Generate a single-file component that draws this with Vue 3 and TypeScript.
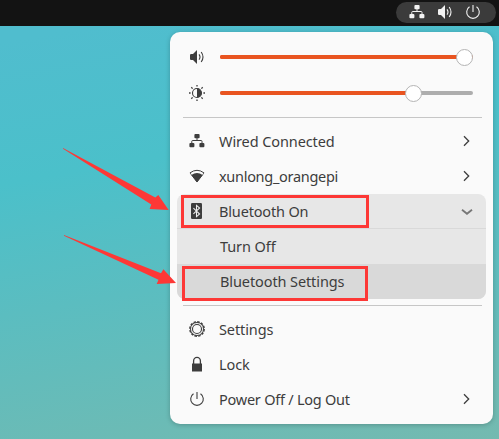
<script setup lang="ts">
interface Item {
  id: string
  label: string
  icon: string
  more?: boolean
}

const sliders = [
  { id: 'volume', value: 96.8 },
  { id: 'brightness', value: 76.3 },
]

const network: Item[] = [
  { id: 'wired', label: 'Wired Connected', icon: 'wired', more: true },
  { id: 'wifi', label: 'xunlong_orangepi', icon: 'wifi', more: true },
]

const session: Item[] = [
  { id: 'settings', label: 'Settings', icon: 'gear' },
  { id: 'lock', label: 'Lock', icon: 'lock' },
  { id: 'power', label: 'Power Off / Log Out', icon: 'power', more: true },
]
</script>

<template>
  <div class="desktop">
    <svg class="sprite" width="0" height="0">
      <symbol id="i-wired" viewBox="0 0 16 16">
        <rect x="5.4" y="1" width="5.2" height="4.2" rx="1" fill="currentColor" />
        <rect x="0.4" y="10" width="5" height="4.2" rx="1" fill="currentColor" />
        <rect x="10.4" y="10" width="5" height="4.2" rx="1" fill="currentColor" />
        <path d="M8 5v2.5M2.8 10.5V8.3Q2.8 7.5 3.6 7.5h8.6q.8 0 .8.8v2.2" fill="none" stroke="currentColor" />
      </symbol>
      <symbol id="i-volume" viewBox="0 0 16 16">
        <path d="M1 5.7 1.8 5H4l4-4v14l-4-4H1.8L1 10.3z" fill="currentColor" />
        <path d="M10 5.4q2 2.6 0 5.2M12.2 3q3.6 5 0 10" fill="none" stroke="currentColor" stroke-width="1.1" />
      </symbol>
      <symbol id="i-power" viewBox="0 0 16 16">
        <path d="M8 1v7M4.5 2.8a6.3 6.3 0 1 0 7 0" fill="none" stroke="currentColor" stroke-width="1.1" />
      </symbol>
      <symbol id="i-brightness" viewBox="0 0 16 16">
        <circle cx="8" cy="8" r="4.5" fill="none" stroke="currentColor" stroke-width="1.1" />
        <path d="M8 3.5a4.5 4.5 0 0 1 0 9z" fill="currentColor" />
        <path d="M8 0v1.6M8 14.4V16M0 8h1.6M14.4 8H16M2.3 2.3l1.3 1.3M12.4 12.4l1.3 1.3M2.3 13.7l1.3-1.3M12.4 3.6l1.3-1.3" stroke="currentColor" stroke-width="1.3" />
      </symbol>
      <symbol id="i-wifi" viewBox="0 0 16 16">
        <path d="M1 4.9Q8-.3 15 4.9L8 14z" fill="none" stroke="currentColor" stroke-linejoin="round" />
        <path d="M2.4 6.9Q8 3.1 13.6 6.9L8 14.2z" fill="currentColor" />
        <path d="M1.6 5.6 2.6 7M14.4 5.6l-1 1.4" stroke="#fafafa" stroke-width=".5" />
      </symbol>
      <symbol id="i-bluetooth" viewBox="0 0 16 16">
        <rect x="2" y="0" width="11" height="16" rx="1.2" fill="currentColor" />
        <path d="M4.4 5.1 10.6 11 7.5 13.6V2.4L10.6 5 4.4 10.9" fill="none" stroke="#efefef" stroke-width="1.05" />
      </symbol>
      <symbol id="i-gear" viewBox="0 0 16 16">
        <circle cx="8" cy="8" r="7.2" fill="none" stroke="currentColor" stroke-width="1.4" stroke-dasharray="2.5 1.27" />
        <circle cx="8" cy="8" r="6.5" fill="none" stroke="currentColor" stroke-width="1" />
        <circle cx="8" cy="8" r="4.5" fill="none" stroke="currentColor" stroke-width="1.1" />
      </symbol>
      <symbol id="i-lock" viewBox="0 0 16 16">
        <path d="M3 7.5h10V15.5H3z" fill="currentColor" />
        <path d="M4.6 8V5a3.4 3.6 0 0 1 6.8 0v3" fill="none" stroke="currentColor" stroke-width="1.3" />
      </symbol>
      <symbol id="i-next" viewBox="0 0 16 16">
        <path d="M6 3.2 10.7 8 6 12.8" fill="none" stroke="currentColor" stroke-width="1.3" />
      </symbol>
      <symbol id="i-down" viewBox="0 0 16 16">
        <path d="M3 6.7 8 10.8l5-4.1" fill="none" stroke="currentColor" stroke-width="1.8" />
      </symbol>
    </svg>

    <header class="topbar">
      <div class="tray">
        <svg class="icon"><use href="#i-wired" /></svg>
        <svg class="icon"><use href="#i-volume" /></svg>
        <svg class="icon"><use href="#i-power" /></svg>
      </div>
    </header>

    <main class="panel">
      <div v-for="s in sliders" :key="s.id" class="slider-row">
        <svg class="icon"><use :href="`#i-${s.id}`" /></svg>
        <div class="track">
          <div class="fill" :style="{ width: s.value + '%' }"><span class="knob" /></div>
        </div>
      </div>
      <hr class="rule" />
      <div v-for="n in network" :key="n.id" class="row">
        <svg class="icon"><use :href="`#i-${n.icon}`" /></svg>
        <span class="label" :class="n.id">{{ n.label }}</span>
        <svg class="icon arrow"><use href="#i-next" /></svg>
      </div>
      <section class="group">
        <div class="row head">
          <svg class="icon"><use href="#i-bluetooth" /></svg>
          <span class="label bluetooth">Bluetooth On</span>
          <svg class="icon arrow down"><use href="#i-down" /></svg>
          <span class="mark mark-head" />
        </div>
        <div class="row sub"><span class="label">Turn Off</span></div>
        <div class="row sub active">
          <span class="label">Bluetooth Settings</span>
          <span class="mark mark-sub" />
        </div>
      </section>
      <hr class="rule" />
      <div v-for="n in session" :key="n.id" class="row">
        <svg class="icon"><use :href="`#i-${n.icon}`" /></svg>
        <span class="label" :class="n.id">{{ n.label }}</span>
        <svg v-if="n.more" class="icon arrow"><use href="#i-next" /></svg>
      </div>
    </main>

    <svg class="pointers" viewBox="0 0 499 439">
      <path d="M63 148 155.3 197.4 158.3 195 168.7 210 149.6 209 151.3 204.5 63 148.8z" />
      <path d="M64 235 161 273.2 163.4 269.2 176 283 156.7 284 158.5 279.7 64 235.8z" />
    </svg>
  </div>
</template>

<style>
body {
  margin: 0;
  overflow: hidden;
}
</style>

<style scoped>
.desktop {
  position: relative;
  width: 499px;
  height: 439px;
  overflow: hidden;
  background: linear-gradient(170deg, #50bdce 8%, #4bc0ca 35%, #5bbdc0 60%, #74bab0 100%);
  color: #3d3d3d;
  font-family: "Noto Sans", "Open Sans", sans-serif;
  font-size: 14.5px;
}
.sprite {
  position: absolute;
}
.topbar {
  box-sizing: border-box;
  height: 26px;
  padding: 2px 3px 0 0;
  display: flex;
  justify-content: flex-end;
  background: #131313;
}
.tray {
  box-sizing: border-box;
  width: 100px;
  height: 21px;
  padding: 0 15px 1px 13px;
  display: flex;
  align-items: center;
  justify-content: space-between;
  border-radius: 11px;
  background: #3b3b3b;
  color: #f2f2f2;
}
.icon {
  width: 16px;
  height: 16px;
  flex: none;
}
.panel {
  box-sizing: border-box;
  width: 323px;
  height: 392px;
  margin: 6px 0 0 170px;
  padding: 7px;
  border-radius: 10px;
  background: #fafafa;
  box-shadow: 0 1px 5px rgba(0, 0, 0, 0.22);
}
.slider-row {
  display: flex;
  align-items: center;
  height: 36px;
  padding: 0 13px 0 12px;
  gap: 15px;
}
.track {
  flex: 1;
  height: 4px;
  border-radius: 2px;
  background: #adadad;
}
.fill {
  display: flex;
  align-items: center;
  justify-content: flex-end;
  height: 4px;
  border-radius: 2px;
  background: #e95420;
}
.slider-row:first-child .track {
  background: #e95420;
}
.knob {
  box-sizing: border-box;
  flex: none;
  width: 17px;
  height: 17px;
  margin-right: -8.5px;
  border: 1px solid #b4b4b4;
  border-radius: 50%;
  background: #fff;
}
.rule {
  height: 1px;
  margin: 6px 4px 6px 6px;
  border: 0;
  background: #c6c6c6;
}
.row {
  position: relative;
  box-sizing: border-box;
  display: flex;
  align-items: center;
  height: 35px;
  padding: 0 12px 1px;
}
.label {
  margin-left: 14px;
  line-height: 20px;
  letter-spacing: -0.1px;
  white-space: nowrap;
}
.wifi {
  letter-spacing: -0.3px;
}
.bluetooth {
  letter-spacing: -0.16px;
}
.power {
  letter-spacing: -0.24px;
}
.arrow {
  margin-left: auto;
}
.down {
  color: #777;
  margin-right: -1px;
}
.group {
  border-radius: 8px;
  background: #e7e7e7;
}
.head {
  padding-bottom: 0;
  border-bottom: 1px solid #d9d9d9;
}
.sub .label {
  margin-left: 31px;
}
.active {
  border-radius: 0 0 8px 8px;
  background: #d9d9d9;
}
.mark {
  position: absolute;
  box-sizing: border-box;
  border: 3px solid #fd3836;
}
.mark-head {
  left: 4px;
  top: 1px;
  width: 188px;
  height: 33px;
}
.mark-sub {
  left: 5px;
  top: 2px;
  width: 186px;
  height: 35px;
}
.pointers {
  position: absolute;
  inset: 0;
  width: 499px;
  height: 439px;
  fill: #fd3836;
}
</style>
